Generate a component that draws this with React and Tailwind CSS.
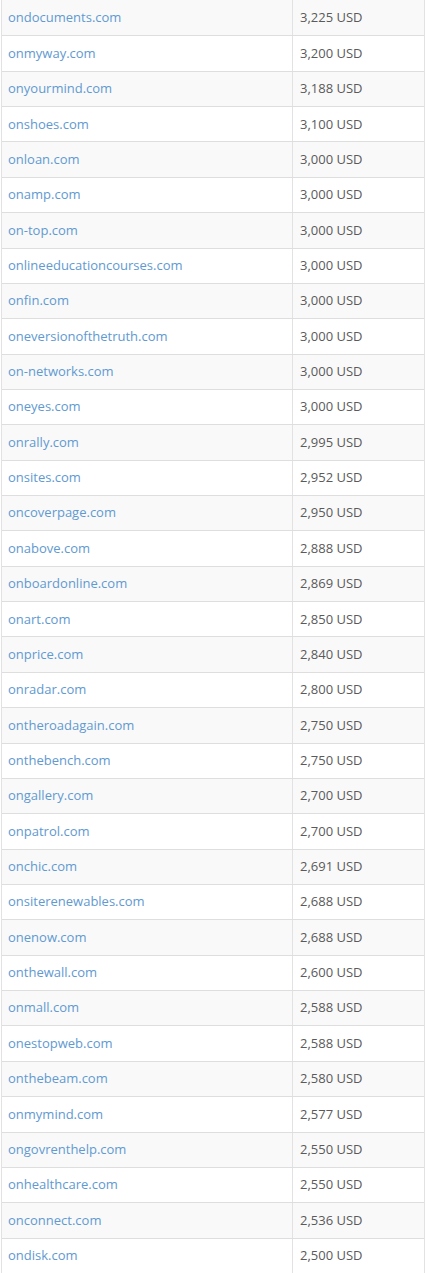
const rows = [
  ["ondocuments.com", "3,225 USD"],
  ["onmyway.com", "3,200 USD"],
  ["onyourmind.com", "3,188 USD"],
  ["onshoes.com", "3,100 USD"],
  ["onloan.com", "3,000 USD"],
  ["onamp.com", "3,000 USD"],
  ["on-top.com", "3,000 USD"],
  ["onlineeducationcourses.com", "3,000 USD"],
  ["onfin.com", "3,000 USD"],
  ["oneversionofthetruth.com", "3,000 USD"],
  ["on-networks.com", "3,000 USD"],
  ["oneyes.com", "3,000 USD"],
  ["onrally.com", "2,995 USD"],
  ["onsites.com", "2,952 USD"],
  ["oncoverpage.com", "2,950 USD"],
  ["onabove.com", "2,888 USD"],
  ["onboardonline.com", "2,869 USD"],
  ["onart.com", "2,850 USD"],
  ["onprice.com", "2,840 USD"],
  ["onradar.com", "2,800 USD"],
  ["ontheroadagain.com", "2,750 USD"],
  ["onthebench.com", "2,750 USD"],
  ["ongallery.com", "2,700 USD"],
  ["onpatrol.com", "2,700 USD"],
  ["onchic.com", "2,691 USD"],
  ["onsiterenewables.com", "2,688 USD"],
  ["onenow.com", "2,688 USD"],
  ["onthewall.com", "2,600 USD"],
  ["onmall.com", "2,588 USD"],
  ["onestopweb.com", "2,588 USD"],
  ["onthebeam.com", "2,580 USD"],
  ["onmymind.com", "2,577 USD"],
  ["ongovrenthelp.com", "2,550 USD"],
  ["onhealthcare.com", "2,550 USD"],
  ["onconnect.com", "2,536 USD"],
  ["ondisk.com", "2,500 USD"],
];

export default function App() {
  return (
    <div
      className="w-[425px] h-[1273px] overflow-hidden bg-white"
      style={{ fontFamily: '"Open Sans", "Liberation Sans", sans-serif' }}
    >
      <div className="ml-px border-l border-r border-[#e2e2e2]">
        {rows.map(([d, p], i) => (
          <div
            key={d}
            className={`flex h-[35.36px] ${i === 0 ? "" : "border-t border-[#dedede]"} ${
              i % 2 === 0 ? "bg-[#f9f9f9]" : "bg-white"
            }`}
          >
            <div className="w-[291px] shrink-0 border-r border-[#e2e2e2] flex items-center pl-[6px] text-[13px] text-[#6199d1]">
              {d}
            </div>
            <div className="flex-1 flex items-center pl-[7px] text-[13px] text-[#5a5a5a]">
              {p}
            </div>
          </div>
        ))}
      </div>
    </div>
  );
}
